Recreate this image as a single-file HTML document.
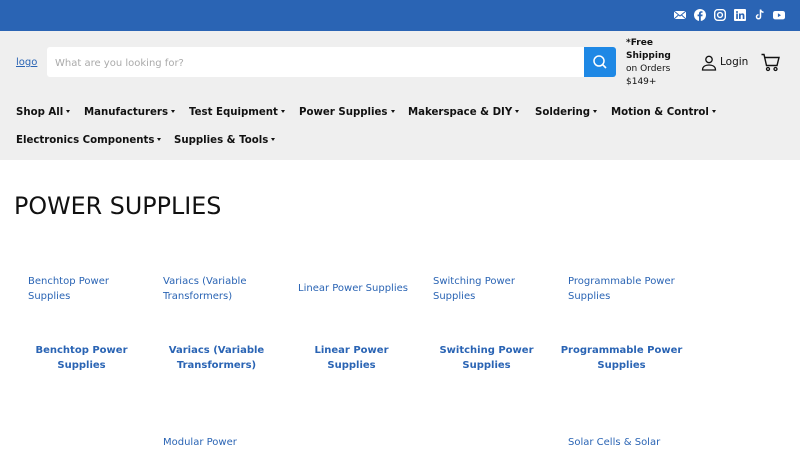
<!DOCTYPE html>
<html><head><meta charset="utf-8"><style>
*{margin:0;padding:0;box-sizing:border-box}
body{width:800px;height:450px;overflow:hidden;font-family:"DejaVu Sans","Liberation Sans",sans-serif;background:#fff;color:#111}
.top{height:31px;background:#2a64b4;position:relative}
.top .ic{position:absolute;top:9px;width:12px;height:12px}
.hdr{background:#efefef;height:129px;position:relative}
.logo{position:absolute;left:16px;top:26px;font-size:10px;color:#2a64b4;text-decoration:underline}
.search{position:absolute;left:47px;top:16px;width:537px;height:30px;background:#fff;border-radius:3px 0 0 3px;font-size:10px;color:#aaa;padding:11px 8px 0}
.btn{position:absolute;left:584px;top:16px;width:32px;height:30px;background:#1e88e5;border-radius:0 3px 3px 0}
.ship{position:absolute;left:626px;top:6px;font-size:9px;line-height:13px}
.login{position:absolute;left:720px;top:25px;font-size:10.5px}
.nav span{position:absolute;font-size:10.2px;font-weight:bold;white-space:nowrap}
.nav span:after{content:"";display:inline-block;margin-left:3px;vertical-align:2px;border-left:2.5px solid transparent;border-right:2.5px solid transparent;border-top:3px solid #111}
.r1{top:76px}.r2{top:104px}
h1{position:absolute;left:14px;top:192px;font-size:23.8px;font-weight:normal}
.c{position:absolute;width:135px;font-size:10px;line-height:15px;color:#2a64b4}
.l{padding-left:14px;padding-right:8px}
.b{font-weight:bold;text-align:center}
</style></head><body>
<div class="top">
<svg class="ic" style="left:674px" viewBox="0 0 12 12"><rect x="0" y="2" width="12" height="8" fill="#fff"/><path d="M0 2l6 5 6-5M0 10l4.5-4M12 10L7.5 6" stroke="#2a64b4" stroke-width="1" fill="none"/></svg>
<svg class="ic" style="left:694px" viewBox="0 0 12 12"><circle cx="6" cy="6" r="6" fill="#fff"/><path d="M6.8 12V7.2h1.6l.2-1.7H6.8V4.6c0-.5.2-.8.8-.8h.9V2.3a10 10 0 0 0-1.3-.1c-1.3 0-2.2.8-2.2 2.2v1.1H3.6v1.7H5V12z" fill="#2a64b4"/></svg>
<svg class="ic" style="left:714px" viewBox="0 0 12 12"><rect x="0.7" y="0.7" width="10.6" height="10.6" rx="3" fill="none" stroke="#fff" stroke-width="1.4"/><circle cx="6" cy="6" r="2.4" fill="none" stroke="#fff" stroke-width="1.4"/></svg>
<svg class="ic" style="left:734px" viewBox="0 0 12 12"><rect width="12" height="12" rx="1" fill="#fff"/><path d="M2.2 4.5h1.7V10H2.2zM3 2a1 1 0 1 1 0 2 1 1 0 0 1 0-2zM5 4.5h1.6v.8c.3-.5.9-.9 1.8-.9 1.7 0 2 1.1 2 2.5V10H8.7V7.3c0-.7 0-1.5-.9-1.5s-1.1.7-1.1 1.5V10H5z" fill="#2a64b4"/></svg>
<svg class="ic" style="left:754px" viewBox="0 0 12 12"><path d="M6.5 0.5v7.3a2 2 0 1 1-2-2M6.5 0.5c.3 1.6 1.4 2.6 3 2.7" fill="none" stroke="#fff" stroke-width="1.5"/></svg>
<svg class="ic" style="left:773px" viewBox="0 0 12 12"><rect x="0" y="2" width="12" height="8.4" rx="2.2" fill="#fff"/><path d="M4.9 4.3v3.8L8 6.2z" fill="#2a64b4"/></svg>
</div>
<div class="hdr">
<div class="logo">logo</div>
<div class="search">What are you looking for?</div>
<div class="btn"><svg width="32" height="30" viewBox="0 0 32 30"><circle cx="15" cy="14" r="5" fill="none" stroke="#fff" stroke-width="1.5"/><path d="M18.6 17.6l3.4 3.4" stroke="#fff" stroke-width="1.6"/></svg></div>
<div class="ship"><b>*Free<br>Shipping</b><br>on Orders<br>$149+</div>
<svg style="position:absolute;left:701px;top:24px" width="16" height="16" viewBox="0 0 16 16"><circle cx="8" cy="4.5" r="3.2" fill="none" stroke="#111" stroke-width="1.3"/><path d="M1.5 15c0-3.5 3-5 6.5-5s6.5 1.5 6.5 5z" fill="none" stroke="#111" stroke-width="1.3"/></svg>
<div class="login">Login</div>
<svg style="position:absolute;left:761px;top:22px" width="19" height="19" viewBox="0 0 19 19"><path d="M0.5 1.5h2.5l2.5 11h10.5l2-8H4" fill="none" stroke="#111" stroke-width="1.4"/><circle cx="7" cy="16" r="1.5" fill="none" stroke="#111" stroke-width="1.3"/><circle cx="14.5" cy="16" r="1.5" fill="none" stroke="#111" stroke-width="1.3"/></svg>
<div class="nav">
<span class="r1" style="left:16px">Shop All</span><span class="r1" style="left:84px">Manufacturers</span><span class="r1" style="left:189px">Test Equipment</span><span class="r1" style="left:299px">Power Supplies</span><span class="r1" style="left:408px">Makerspace &amp; DIY</span><span class="r1" style="left:535px">Soldering</span><span class="r1" style="left:611px">Motion &amp; Control</span>
<span class="r2" style="left:16px">Electronics Components</span><span class="r2" style="left:174px">Supplies &amp; Tools</span>
</div>
</div>
<h1>POWER SUPPLIES</h1>
<div class="c l" style="left:14px;top:274px">Benchtop Power Supplies</div>
<div class="c l" style="left:149px;top:274px">Variacs (Variable Transformers)</div>
<div class="c l" style="left:284px;top:281px;white-space:nowrap">Linear Power Supplies</div>
<div class="c l" style="left:419px;top:274px">Switching Power Supplies</div>
<div class="c l" style="left:554px;top:274px">Programmable Power Supplies</div>
<div class="c b" style="left:14px;top:343px">Benchtop Power<br>Supplies</div>
<div class="c b" style="left:149px;top:343px">Variacs (Variable<br>Transformers)</div>
<div class="c b" style="left:284px;top:343px">Linear Power<br>Supplies</div>
<div class="c b" style="left:419px;top:343px">Switching Power<br>Supplies</div>
<div class="c b" style="left:539px;top:343px;width:165px">Programmable Power<br>Supplies</div>
<div class="c l" style="left:149px;top:435px">Modular Power</div>
<div class="c l" style="left:554px;top:435px">Solar Cells &amp; Solar</div>
</body></html>
